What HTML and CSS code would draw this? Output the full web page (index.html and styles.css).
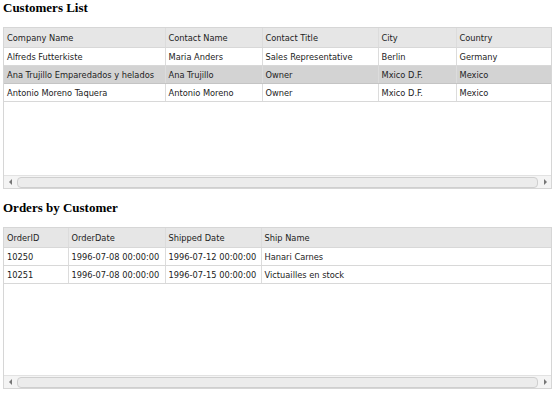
FILE: index.html
```html
<!DOCTYPE html>
<html>
<head>
<meta charset="utf-8">
<link rel="stylesheet" href="styles.css">
</head>
<body>
<div class="page">
  <h2 class="title">Customers List</h2>
  <div class="grid">
    <table class="tbl">
      <colgroup>
        <col style="width:161px"><col style="width:97px"><col style="width:116px"><col style="width:78px"><col>
      </colgroup>
      <thead>
        <tr><th>Company Name</th><th>Contact Name</th><th>Contact Title</th><th>City</th><th>Country</th></tr>
      </thead>
      <tbody>
        <tr><td>Alfreds Futterkiste</td><td>Maria Anders</td><td>Sales Representative</td><td>Berlin</td><td>Germany</td></tr>
        <tr class="sel"><td>Ana Trujillo Emparedados y helados</td><td>Ana Trujillo</td><td>Owner</td><td>Mxico D.F.</td><td>Mexico</td></tr>
        <tr><td>Antonio Moreno Taquera</td><td>Antonio Moreno</td><td>Owner</td><td>Mxico D.F.</td><td>Mexico</td></tr>
      </tbody>
    </table>
    <div class="fill"></div>
    <div class="hscroll">
      <span class="arrow left"></span>
      <span class="track"></span>
      <span class="arrow right"></span>
    </div>
  </div>

  <h2 class="title second">Orders by Customer</h2>
  <div class="grid">
    <table class="tbl">
      <colgroup>
        <col style="width:64px"><col style="width:97px"><col style="width:96px"><col>
      </colgroup>
      <thead>
        <tr><th>OrderID</th><th>OrderDate</th><th>Shipped Date</th><th>Ship Name</th></tr>
      </thead>
      <tbody>
        <tr><td>10250</td><td>1996-07-08 00:00:00</td><td>1996-07-12 00:00:00</td><td>Hanari Carnes</td></tr>
        <tr><td>10251</td><td>1996-07-08 00:00:00</td><td>1996-07-15 00:00:00</td><td>Victuailles en stock</td></tr>
      </tbody>
    </table>
    <div class="fill"></div>
    <div class="hscroll">
      <span class="arrow left"></span>
      <span class="track"></span>
      <span class="arrow right"></span>
    </div>
  </div>
</div>
</body>
</html>
```

FILE: styles.css
```css
html, body {
  margin: 0;
  padding: 0;
  background: #ffffff;
}
.page {
  padding: 0 5px 0 3px;
  display: flex;
  flex-direction: column;
}
.title {
  margin: 0;
  padding-top: 1px;
  height: 26px;
  font-family: "Liberation Serif", serif;
  font-weight: bold;
  font-size: 13px;
  line-height: 13px;
  color: #000;
}
.title.second {
  margin-top: 11px;
}
.grid {
  height: 160px;
  border: 1px solid #d6d6d6;
  display: flex;
  flex-direction: column;
  box-sizing: content-box;
}
.tbl {
  width: 100%;
  table-layout: fixed;
  border-collapse: collapse;
  font-family: "DejaVu Sans Condensed", "DejaVu Sans", sans-serif;
  font-stretch: condensed;
  font-size: 9.2px;
  color: #222;
}
.tbl th, .tbl td {
  height: 18px;
  padding: 0 0 0 3px;
  text-align: left;
  font-weight: normal;
  white-space: nowrap;
  overflow: hidden;
  border-left: 1px solid #dcdcdc;
  border-bottom: 1px solid #d8d8d8;
  box-sizing: border-box;
}
.tbl th:first-child, .tbl td:first-child {
  border-left: none;
}
.tbl th {
  height: 19px;
  background: #e6e6e6;
}
.tbl tr.sel td {
  background: #d3d3d3;
  border-bottom-color: #c4c4c4;
}
.fill {
  flex: 1;
}
.hscroll {
  height: 12px;
  display: flex;
  align-items: center;
  gap: 3px;
  padding: 0 2px;
  background: #f4f4f4;
  border-top: 1px solid #e2e2e2;
}
.track {
  flex: 1;
  height: 9px;
  border: 1px solid #cfcfcf;
  border-radius: 4px;
  background: #ececec;
}
.arrow {
  width: 8px;
  height: 10px;
  display: flex;
  align-items: center;
  justify-content: center;
}
.arrow.left::before {
  content: "";
  border-top: 3px solid transparent;
  border-bottom: 3px solid transparent;
  border-right: 3px solid #777;
}
.arrow.right::before {
  content: "";
  border-top: 3px solid transparent;
  border-bottom: 3px solid transparent;
  border-left: 3px solid #777;
}
```
